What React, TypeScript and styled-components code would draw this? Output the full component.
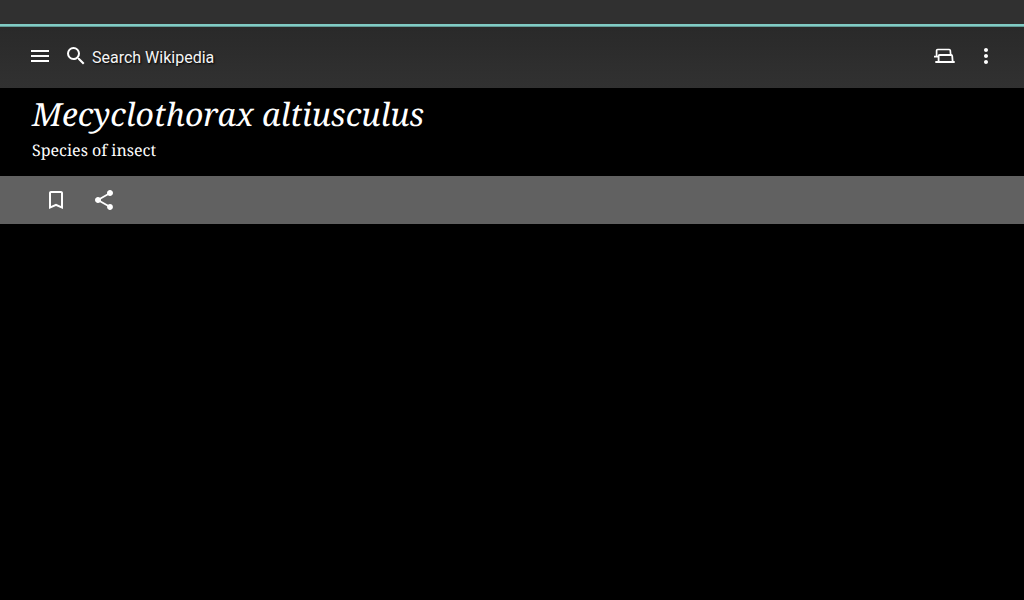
import React from "react";
import styled, { createGlobalStyle } from "styled-components";

const GlobalStyle = createGlobalStyle`
  * { box-sizing: border-box; }
  body { margin: 0; background: #000; color: #fff; }
`;

const StatusBar = styled.div`
  height: 24px;
  background: #303030;
`;

const Toolbar = styled.header`
  position: relative;
  display: flex;
  align-items: center;
  height: 64px;
  padding: 0 14px 0 16px;
  background: linear-gradient(#292929, #313131);
`;

const LoadingBar = styled.div`
  position: absolute;
  top: 0;
  left: 0;
  right: 0;
  height: 3px;
  background: #80cbc4;
  border-bottom: 1px solid #649b96;
`;

const IconButton = styled.button<{ $width?: number }>`
  display: flex;
  align-items: center;
  justify-content: center;
  width: ${({ $width = 48 }) => $width}px;
  height: 48px;
  padding: 0;
  border: 0;
  background: none;
  color: #fff;
`;

const SearchField = styled.label`
  display: flex;
  flex: 1;
  align-items: center;
  gap: 4px;
`;

const SearchInput = styled.input`
  flex: 1;
  min-width: 0;
  height: 24px;
  padding: 2px 0 0;
  border: 0;
  outline: 0;
  background: none;
  color: #fff;
  font: 16px/20px Roboto, sans-serif;
  text-shadow: 1px 1px 2px #000;
  &::placeholder { color: #f5f5f5; opacity: 1; }
`;

const TitleBlock = styled.section`
  height: 88px;
  padding: 5px 32px 0;
  font-family: "Noto Serif", "Liberation Serif", serif;
`;

const Title = styled.h1`
  margin: 0;
  font-size: 32px;
  font-style: italic;
  font-weight: 400;
  line-height: 44px;
  text-rendering: geometricPrecision;
`;

const Description = styled.p`
  margin: 0;
  font-size: 16px;
  line-height: 26px;
  text-rendering: geometricPrecision;
`;

const ActionBar = styled.nav`
  display: flex;
  height: 48px;
  padding: 0 32px;
  background: #616161;
`;

const Icon = ({ children }: { children: React.ReactNode }) => (
  <svg width="24" height="24" viewBox="0 0 24 24" fill="currentColor" aria-hidden="true">
    {children}
  </svg>
);

export default function App() {
  return (
    <>
      <GlobalStyle />
      <StatusBar />
      <Toolbar>
        <LoadingBar />
        <IconButton aria-label="Menu">
          <Icon><path d="M3 18h18v-2H3v2zm0-5h18v-2H3v2zm0-7v2h18V6H3z" /></Icon>
        </IconButton>
        <SearchField>
          <Icon><path d="M15.5 14h-.79l-.28-.27A6.471 6.471 0 0 0 16 9.5 6.5 6.5 0 1 0 9.5 16c1.61 0 3.09-.59 4.23-1.57l.27.28v.79l5 4.99L20.49 19l-4.99-5zm-6 0C7.01 14 5 11.99 5 9.5S7.01 5 9.5 5 14 7.01 14 9.5 11.99 14 9.5 14z" /></Icon>
          <SearchInput type="text" placeholder="Search Wikipedia" aria-label="Search Wikipedia" />
        </SearchField>
        <IconButton $width={36} aria-label="Show tabs">
          <Icon>
            <path d="M4.6 12.5V6.6Q4.6 5.5 5.7 5.5H17.2Q18.2 5.5 18.3 6.5L18.7 11M2 12.6H6" fill="none" stroke="currentColor" strokeWidth="1.7" />
            <path d="M6.6 18V12Q6.6 11 7.6 11H19.1Q20.1 11 20.2 12L20.7 18M3.3 18H22.7" fill="none" stroke="currentColor" strokeWidth="1.8" />
          </Icon>
        </IconButton>
        <IconButton aria-label="More options">
          <Icon><path d="M12 8c1.1 0 2-.9 2-2s-.9-2-2-2-2 .9-2 2 .9 2 2 2zm0 2c-1.1 0-2 .9-2 2s.9 2 2 2 2-.9 2-2-.9-2-2-2zm0 6c-1.1 0-2 .9-2 2s.9 2 2 2 2-.9 2-2-.9-2-2-2z" /></Icon>
        </IconButton>
      </Toolbar>
      <main>
        <TitleBlock>
          <Title>Mecyclothorax altiusculus</Title>
          <Description>Species of insect</Description>
        </TitleBlock>
        <ActionBar aria-label="Page actions">
          <IconButton aria-label="Save page">
            <Icon><path d="M17 3H7c-1.1 0-2 .9-2 2v16l7-3 7 3V5c0-1.1-.9-2-2-2zm0 15l-5-2.18L7 18V5h10v13z" /></Icon>
          </IconButton>
          <IconButton aria-label="Share page">
            <Icon><path d="M18 16.08c-.76 0-1.44.3-1.96.77L8.91 12.7c.05-.23.09-.46.09-.7s-.04-.47-.09-.7l7.05-4.11c.54.5 1.25.81 2.04.81 1.66 0 3-1.34 3-3s-1.34-3-3-3-3 1.34-3 3c0 .24.04.47.09.7L8.04 9.81C7.5 9.31 6.79 9 6 9c-1.66 0-3 1.34-3 3s1.34 3 3 3c.79 0 1.5-.31 2.04-.81l7.12 4.16c-.05.21-.08.43-.08.65 0 1.61 1.31 2.92 2.92 2.92 1.61 0 2.92-1.31 2.92-2.92s-1.31-2.92-2.92-2.92z" /></Icon>
          </IconButton>
        </ActionBar>
      </main>
    </>
  );
}
